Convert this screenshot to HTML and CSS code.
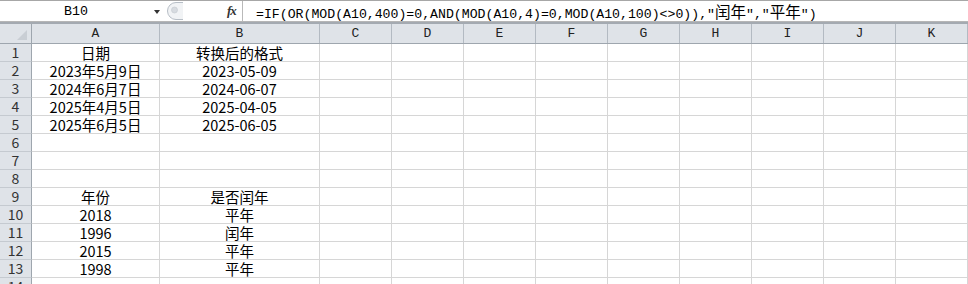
FILE: index.html
```html
<!DOCTYPE html>
<html>

<head>
    <title>Book1 - Sheet1</title>
    <link rel="stylesheet" href="styles.css">
</head>

<body>
    <div class="fbar">
        <div class="namebox">
            <span class="namebox-text">B10</span>
            <span class="arrow"></span>
        </div>
        <div class="grip">
            <svg width="18" height="20" viewBox="0 0 18 20">
                <path d="M17 1.5 H10 A8.5 8.5 0 0 0 10 18.5 H17" fill="#f1f3f5" stroke="#b7bec6" />
                <circle cx="8.5" cy="9" r="3" fill="#d7dbe0" stroke="#c3c8ce" stroke-width="0.6" />
            </svg>
        </div>
        <div class="fx">fx</div>
        <div class="formula">=IF(OR(MOD(A10,400)=0,AND(MOD(A10,4)=0,MOD(A10,100)&lt;&gt;0)),"<span class="cjk">闰年</span>","<span class="cjk">平年</span>")</div>
    </div>
    <div class="fbar-edge"></div>

    <div class="sheet">
        <div class="row hdr">
            <div class="corner"><span class="tri"></span></div>
            <div class="col-a">A</div>
            <div class="col-b">B</div>
            <div class="col">C</div>
            <div class="col">D</div>
            <div class="col">E</div>
            <div class="col">F</div>
            <div class="col">G</div>
            <div class="col">H</div>
            <div class="col">I</div>
            <div class="col">J</div>
            <div class="col">K</div>
        </div>
        <div id="rows"></div>
    </div>

    <script>
        var data = [
            ['日期', '转换后的格式'],
            ['2023年5月9日', '2023-05-09'],
            ['2024年6月7日', '2024-06-07'],
            ['2025年4月5日', '2025-04-05'],
            ['2025年6月5日', '2025-06-05'],
            [],
            [],
            [],
            ['年份', '是否闰年'],
            ['2018', '平年'],
            ['1996', '闰年'],
            ['2015', '平年'],
            ['1998', '平年'],
            []
        ];

        var rows = document.getElementById('rows');
        for (var i = 0; i < data.length; i++) {
            var row = document.createElement('div');
            row.className = 'row';
            var html = '<div class="rh">' + (i + 1) + '</div>';
            html += '<div class="cell col-a">' + (data[i][0] || '') + '</div>';
            html += '<div class="cell col-b">' + (data[i][1] || '') + '</div>';
            for (var c = 0; c < 9; c++) {
                html += '<div class="cell col"></div>';
            }
            row.innerHTML = html;
            rows.appendChild(row);
        }
    </script>
</body>

</html>
```

FILE: styles.css
```css
body {
    margin: 0;
    width: 968px;
    height: 284px;
    overflow: hidden;
    background-color: #fff;
    font-family: "Noto Sans CJK SC", sans-serif;
}

/* formula bar */
.fbar {
    display: flex;
    height: 21px;
    border-top: 1px solid #a7a7a7;
    box-sizing: border-box;
    background-color: #fff;
}

.namebox {
    width: 166px;
    display: flex;
    align-items: center;
}

.namebox-text {
    width: 152px;
    text-align: center;
    font-family: "Liberation Mono", monospace;
    font-size: 13.3px;
    color: #000;
}

.arrow {
    width: 0;
    height: 0;
    margin-left: 2px;
    margin-top: 2px;
    border-left: 3.5px solid transparent;
    border-right: 3.5px solid transparent;
    border-top: 4px solid #333;
}

.grip {
    width: 61px;
    display: flex;
    align-items: center;
}

.fx {
    width: 15px;
    font-family: "Liberation Serif", serif;
    font-style: italic;
    font-weight: bold;
    font-size: 13px;
    line-height: 19px;
    color: #333;
    letter-spacing: -1px;
}

.formula {
    flex: 1;
    border-left: 1px solid #b9b9b9;
    padding-left: 13px;
    font-family: "Liberation Mono", monospace;
    font-size: 13.2px;
    line-height: 20px;
    white-space: nowrap;
    color: #000;
}

.cjk {
    font-family: "Noto Sans CJK SC", sans-serif;
    font-size: 15.5px;
}

.fbar-edge {
    height: 3px;
    border-top: 1px solid #b6b6b6;
    border-bottom: 2px solid #a4aab1;
    box-sizing: border-box;
}

/* grid */
.row {
    display: flex;
    height: 18px;
}

.hdr {
    height: 20px;
    background-color: #dfe3e8;
    border-bottom: 1px solid #9ea6ae;
    box-sizing: border-box;
    font-family: "Liberation Mono", monospace;
    font-size: 13px;
    line-height: 19px;
    color: #222;
}

.hdr div {
    border-right: 1px solid #b3bac2;
    box-sizing: border-box;
    text-align: center;
}

.corner {
    width: 32px;
    position: relative;
}

.hdr .corner {
    border-right: 1px solid #9ea6ae;
}

.tri {
    position: absolute;
    right: 4px;
    bottom: 3px;
    width: 0;
    height: 0;
    border-left: 10px solid transparent;
    border-bottom: 10px solid #c9ced4;
}

.col-a {
    width: 128px;
}

.col-b {
    width: 160px;
}

.col {
    width: 72px;
}

.rh {
    width: 32px;
    box-sizing: border-box;
    background-color: #dfe3e8;
    border-right: 1px solid #9ea6ae;
    border-bottom: 1px solid #c5cad0;
    text-align: center;
    font-size: 14px;
    line-height: 17px;
    color: #333;
}

.cell {
    box-sizing: border-box;
    border-right: 1px solid #d6d6d6;
    border-bottom: 1px solid #d6d6d6;
    text-align: center;
    font-size: 14.5px;
    line-height: 17px;
    white-space: nowrap;
    color: #000;
}
```
